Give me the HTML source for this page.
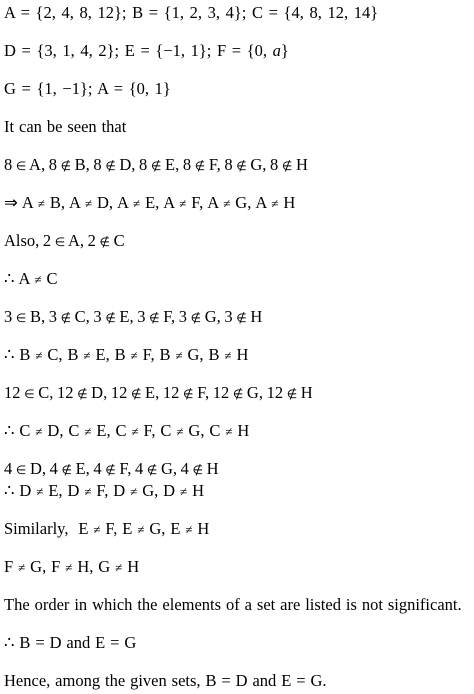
<!DOCTYPE html><html><head><style>
body{margin:0;width:474px;height:694px;background:#fff;position:relative;font-family:"Liberation Serif",serif;font-size:16.5px;word-spacing:0.8px;color:#000}
div{position:absolute;left:4px;line-height:18px;white-space:nowrap}
.w{word-spacing:1.5px}
.n{word-spacing:-0.5px}
s{text-decoration:none;font-size:12px}
u{text-decoration:none;font-size:13px}
</style></head><body>
<div class="w" style="top:4px">A = {2, 4, 8, 12}; B = {1, 2, 3, 4}; C = {4, 8, 12, 14}</div>
<div class="w" style="top:42px">D = {3, 1, 4, 2}; E = {−1, 1}; F = {0, <i>a</i>}</div>
<div class="w" style="top:80px">G = {1, −1}; A = {0, 1}</div>
<div style="top:118px">It can be seen that</div>
<div class="n" style="top:156px">8 <s>∈</s> A, 8 <s>∉</s> B, 8 <s>∉</s> D, 8 <s>∉</s> E, 8 <s>∉</s> F, 8 <s>∉</s> G, 8 <s>∉</s> H</div>
<div style="top:194px">⇒ A <u>≠</u> B, A <u>≠</u> D, A <u>≠</u> E, A <u>≠</u> F, A <u>≠</u> G, A <u>≠</u> H</div>
<div class="n" style="top:232px">Also, 2 <s>∈</s> A, 2 <s>∉</s> C</div>
<div style="top:270px">∴ A <u>≠</u> C</div>
<div class="n" style="top:308px">3 <s>∈</s> B, 3 <s>∉</s> C, 3 <s>∉</s> E, 3 <s>∉</s> F, 3 <s>∉</s> G, 3 <s>∉</s> H</div>
<div style="top:346px">∴ B <u>≠</u> C, B <u>≠</u> E, B <u>≠</u> F, B <u>≠</u> G, B <u>≠</u> H</div>
<div class="n" style="top:384px">12 <s>∈</s> C, 12 <s>∉</s> D, 12 <s>∉</s> E, 12 <s>∉</s> F, 12 <s>∉</s> G, 12 <s>∉</s> H</div>
<div style="top:422px">∴ C <u>≠</u> D, C <u>≠</u> E, C <u>≠</u> F, C <u>≠</u> G, C <u>≠</u> H</div>
<div class="n" style="top:460px">4 <s>∈</s> D, 4 <s>∉</s> E, 4 <s>∉</s> F, 4 <s>∉</s> G, 4 <s>∉</s> H</div>
<div style="top:482px">∴ D <u>≠</u> E, D <u>≠</u> F, D <u>≠</u> G, D <u>≠</u> H</div>
<div style="top:520px">Similarly,&nbsp; E <u>≠</u> F, E <u>≠</u> G, E <u>≠</u> H</div>
<div style="top:558px">F <u>≠</u> G, F <u>≠</u> H, G <u>≠</u> H</div>
<div style="top:596px">The order in which the elements of a set are listed is not significant.</div>
<div style="top:634px">∴ B = D and E = G</div>
<div style="top:672px">Hence, among the given sets, B = D and E = G.</div>
</body></html>
